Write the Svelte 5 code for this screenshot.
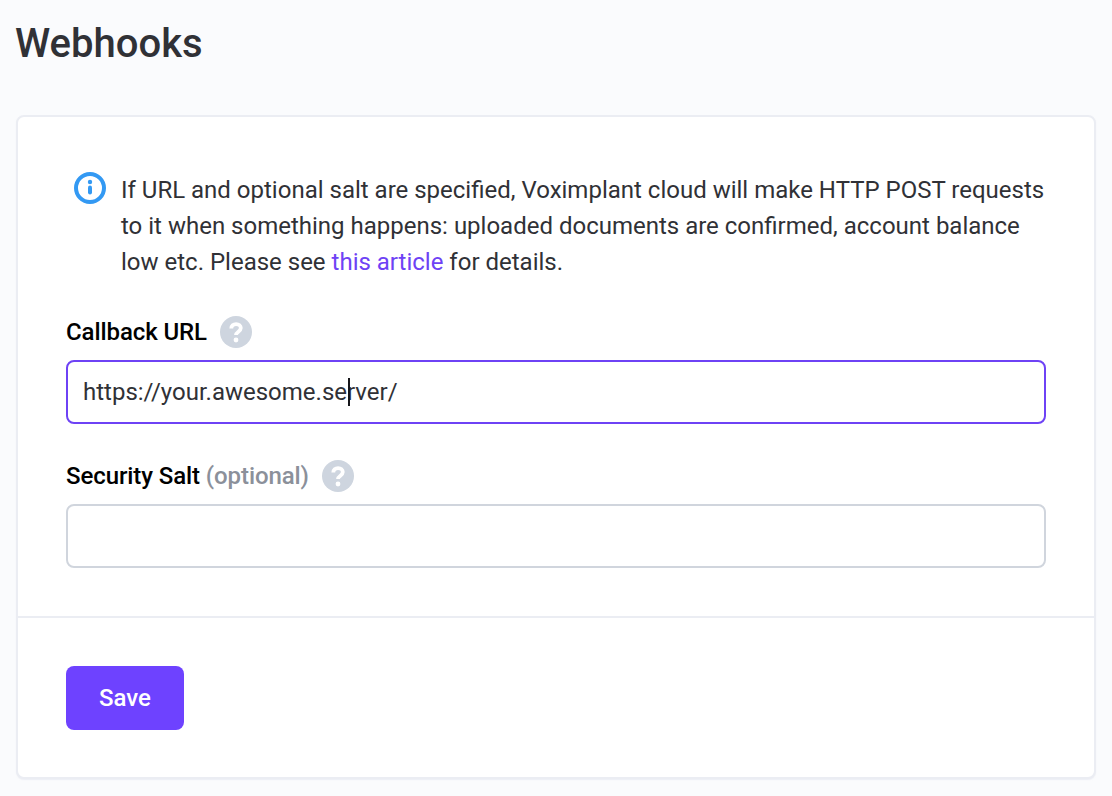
<script>
  let url = "https://your.awesome.server/";
  let salt = "";
</script>

{#snippet help()}
  <svg class="help" viewBox="0 0 32 32" width="32" height="32" aria-hidden="true">
    <circle cx="16" cy="16" r="16" fill="#ced5df" />
    <path d="M11.3 12.6c0-2.9 2.1-4.5 4.8-4.5s4.7 1.6 4.7 4c0 3.5-4.8 3.6-4.8 7" fill="none" stroke="#fff" stroke-width="3.8" />
    <circle cx="16" cy="24" r="2.4" fill="#fff" />
  </svg>
{/snippet}

<main>
  <h1>Webhooks</h1>

  <section class="card">
    <div class="body">
      <div class="note">
        <svg class="info" viewBox="0 0 32 32" width="32" height="32" aria-hidden="true">
          <circle cx="16" cy="16" r="14" fill="none" stroke="#3399f3" stroke-width="4" />
          <circle cx="16" cy="10" r="2.2" fill="#3399f3" />
          <rect x="14" y="13.5" width="4" height="9" rx="2" fill="#3399f3" />
        </svg>
        <p>
          If URL and optional salt are specified, Voximplant cloud will make HTTP POST requests
          to it when something happens: uploaded documents are confirmed, account balance
          low etc. Please see <a href="#article">this article</a> for details.
        </p>
      </div>

      <div class="field first">
        <label for="url">
          Callback URL
          {@render help()}
        </label>
        <div class="input-wrap">
          <input id="url" class="focused" type="text" bind:value={url} />
          <span class="caret"></span>
        </div>
      </div>

      <div class="field">
        <label for="salt">
          <span>Security Salt <span class="optional">(optional)</span></span>
          {@render help()}
        </label>
        <div class="input-wrap">
          <input id="salt" type="text" bind:value={salt} />
        </div>
      </div>
    </div>

    <div class="footer">
      <button type="button">Save</button>
    </div>
  </section>
</main>

<style>
  :global(body) {
    background: #fafbfd;
    font-family: Roboto, "Liberation Sans", sans-serif;
  }

  main {
    padding: 16px 16px 0;
    height: 796px;
    box-sizing: border-box;
    overflow: hidden;
  }

  h1 {
    margin: 0 0 43px -1px;
    font-size: 40px;
    line-height: 56px;
    font-weight: 500;
    color: #303136;
  }

  .card {
    background: #fff;
    border: 2px solid #ebedf3;
    border-radius: 8px;
    box-sizing: border-box;
    height: 664px;
    box-shadow: 0 1px 1px rgba(225, 228, 238, 0.5);
  }

  .body {
    padding: 55px 48px 0;
    height: 501px;
    box-sizing: border-box;
    border-bottom: 2px solid #ebedf3;
  }

  .note {
    display: flex;
    gap: 15px;
    padding-left: 8px;
  }

  .info {
    flex: none;
  }

  .note p {
    margin: 0;
    font-size: 24px;
    line-height: 36px;
    color: #303136;
  }

  .note a {
    color: #6e42f5;
    text-decoration: none;
  }

  .field {
    margin-top: 34px;
  }

  .field.first {
    margin-top: 34px;
  }

  label {
    display: flex;
    align-items: center;
    gap: 13px;
    height: 36px;
    font-size: 24px;
    font-weight: 500;
    letter-spacing: -0.09px;
    color: #000;
    margin-bottom: 10px;
  }

  .optional {
    color: #8b909a;
  }

  .help {
    flex: none;
  }

  .input-wrap {
    position: relative;
  }

  input {
    display: block;
    width: 100%;
    height: 64px;
    box-sizing: border-box;
    padding: 0 15px;
    border: 2px solid #d0d5dd;
    border-radius: 8px;
    background: #fff;
    font: 400 24px Roboto, "Liberation Sans", sans-serif;
    color: #303136;
    outline: none;
  }

  input.focused {
    border-color: #6e42f5;
  }

  .caret {
    position: absolute;
    left: 282px;
    top: 18px;
    width: 2px;
    height: 28px;
    background: #16161a;
  }

  .footer {
    padding: 48px;
  }

  button {
    display: block;
    width: 118px;
    height: 64px;
    border: 0;
    border-radius: 8px;
    background: #6e42ff;
    color: #fff;
    font: 500 24px Roboto, "Liberation Sans", sans-serif;
  }
</style>
